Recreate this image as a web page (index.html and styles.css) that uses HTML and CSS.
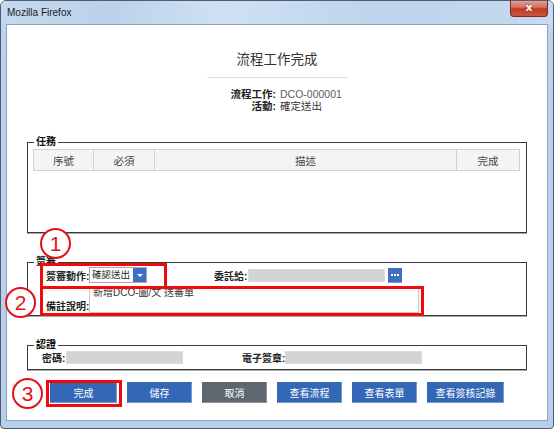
FILE: index.html
```html
<!DOCTYPE html>
<html>
<head>
<meta charset="utf-8">
<link rel="stylesheet" href="styles.css">
</head>
<body>
<div class="window">
  <div class="titlebar">
    <span class="title">Mozilla Firefox</span>
    <div class="close">x</div>
  </div>
  <div class="content">
    <h1 class="heading">流程工作完成</h1>
    <div class="rule"></div>
    <div class="info">
      <span class="info-label">流程工作:</span><span class="info-value code">DCO-000001</span>
      <span class="info-label">活動:</span><span class="info-value">確定送出</span>
    </div>

    <div class="group group-task">
      <span class="legend">任務</span>
      <div class="thead">
        <div class="th">序號</div>
        <div class="th">必須</div>
        <div class="th">描述</div>
        <div class="th">完成</div>
      </div>
      <div class="tbody"></div>
    </div>

    <div class="group group-sign">
      <span class="legend">簽審</span>
      <div class="row row-action">
        <span class="label">簽審動作:</span>
        <div class="select"><span class="select-text">確認送出</span><span class="select-btn"><span class="tri"></span></span></div>
        <span class="label label-delegate">委託給:</span>
        <div class="input input-delegate"></div>
        <div class="dots-btn"><span></span><span></span><span></span></div>
      </div>
      <div class="row row-note">
        <span class="label">備註說明:</span>
        <div class="textarea">新增DCO-圖/文 送審單</div>
      </div>
    </div>

    <div class="group group-auth">
      <span class="legend">認證</span>
      <div class="row row-auth">
        <span class="label label-pwd">密碼:</span>
        <div class="input input-pwd"></div>
        <span class="label label-esign">電子簽章:</span>
        <div class="input input-esign"></div>
      </div>
    </div>

    <div class="buttons">
      <div class="btn w67">完成</div>
      <div class="btn w65">儲存</div>
      <div class="btn w65 gray">取消</div>
      <div class="btn w65">查看流程</div>
      <div class="btn w65">查看表單</div>
      <div class="btn w77">查看簽核記錄</div>
    </div>
  </div>

  <div class="mark circle c1">1</div>
  <div class="mark circle c2">2</div>
  <div class="mark circle c3">3</div>
  <div class="mark box b1"></div>
  <div class="mark box b2"></div>
  <div class="mark box b3"></div>
</div>
</body>
</html>
```

FILE: styles.css
```css
* { box-sizing: border-box; }
html, body { margin: 0; padding: 0; background: #fff; }
body { font-family: "Liberation Sans", "Noto Sans CJK TC", sans-serif; color: #222; }

.window {
  position: relative;
  width: 554px;
  height: 429px;
  border: 1px solid #4d5d72;
  border-radius: 6px 6px 4px 4px;
  background: linear-gradient(180deg, #d3e3f4 0%, #bcd3ec 8%, #b7cfe9 100%);
  overflow: hidden;
}

.titlebar {
  height: 23px;
  position: relative;
  display: flex;
  align-items: center;
  padding-left: 6px;
  background: linear-gradient(90deg, #c4d9ef 0%, #bcd2ea 20%, #cfe0f3 40%, #bdd4ec 70%, #c6daf0 100%);
}
.title { font-size: 10px; color: #1a1a1a; }
.close {
  position: absolute;
  right: 5px;
  top: -1px;
  width: 38px;
  height: 17px;
  border: 1px solid #7a2a20;
  border-top: none;
  border-radius: 0 0 4px 4px;
  background: linear-gradient(180deg, #e7a898 0%, #d57060 45%, #c03a26 55%, #c9553f 100%);
  color: #fff;
  font-family: "DejaVu Sans", sans-serif;
  font-weight: bold;
  font-size: 11px;
  line-height: 15px;
  text-align: center;
  text-shadow: 0 0 2px #6b1a10;
}

.content {
  margin-left: 5px;
  width: 542px;
  height: 397px;
  background: #fff;
  border: 1px solid #8aa3c0;
  display: flex;
  flex-direction: column;
}

.heading {
  margin: 27px 0 0;
  font-size: 13.5px;
  line-height: 16px;
  font-weight: normal;
  text-align: center;
  color: #333;
}
.rule {
  align-self: center;
  width: 141px;
  height: 1px;
  background: #dcdcdc;
  margin-top: 9px;
}
.info {
  margin-top: 10px;
  display: grid;
  grid-template-columns: 1fr 1fr;
  column-gap: 4px;
  padding-left: 2px;
  font-size: 10.5px;
  line-height: 12px;
}
.info-label { text-align: right; font-weight: bold; color: #222; }
.info-value { color: #333; }
.info-value.code { color: #5a5a6a; }

.group {
  position: relative;
  margin: 0 20px;
  border: 1px solid #3a3a3a;
  box-shadow: 0 1px 0 #a8a8a8;
}
.legend {
  position: absolute;
  top: -7px;
  left: 6px;
  padding: 0 2px;
  background: #fff;
  font-size: 10px;
  line-height: 12px;
  font-weight: bold;
  color: #111;
}

.group-task { margin-top: 30px; padding: 6px 6px 0 5px; }
.thead {
  display: grid;
  grid-template-columns: 60px 61px 1fr 62px;
  height: 22px;
  border: 1px solid #d2d2d2;
  background: #f4f4f4;
}
.th {
  border-right: 1px solid #d2d2d2;
  font-size: 10.5px;
  color: #444;
  display: flex;
  align-items: center;
  justify-content: center;
}
.th:last-child { border-right: none; }
.tbody { height: 61px; }

.group-sign { margin-top: 29px; padding-left: 18px; }
.row { display: flex; }
.label { font-size: 10px; color: #222; font-weight: bold; white-space: nowrap; }
.row-action { height: 24px; align-items: center; }
.row-action .label { width: 43px; }
.select {
  width: 58px;
  height: 16px;
  border: 1px solid #a9a9a9;
  display: flex;
  align-items: stretch;
}
.select-text { flex: 1; font-size: 9.5px; line-height: 14px; padding-left: 2px; color: #222; white-space: nowrap; overflow: hidden; }
.select-btn {
  width: 13px;
  flex: none;
  background: #3d6fc2;
  display: flex;
  align-items: center;
  justify-content: center;
}
.tri {
  width: 0; height: 0;
  border-left: 3px solid transparent;
  border-right: 3px solid transparent;
  border-top: 3px solid #fff;
}
.row-action .label-delegate { width: 34px; margin-left: 67px; }
.input { background: #d4d4d4; border: 1px solid #dcdcdc; }
.input-delegate { width: 137px; height: 13px; }
.dots-btn {
  width: 14px;
  height: 15px;
  margin-left: 3px;
  background: #3f6fc0;
  border-bottom: 1px solid #7c9cd6;
  display: flex;
  align-items: center;
  justify-content: center;
  gap: 1px;
}
.dots-btn span { width: 2px; height: 2px; background: #fff; }

.row-note { height: 28px; align-items: flex-start; }
.row-note .label { width: 43px; align-self: flex-end; line-height: 14px; padding-bottom: 1px; }
.textarea {
  width: 330px;
  height: 26px;
  border: 1px solid #c8c8c8;
  border-top: none;
  font-size: 10px;
  line-height: 12px;
  padding: 0 0 0 3px;
  color: #333;
}

.group-auth { margin-top: 29px; padding-left: 14px; }
.row-auth { height: 23px; align-items: center; }
.label-pwd { width: 24px; }
.input-pwd { width: 117px; height: 13px; }
.label-esign { width: 43px; margin-left: 59px; }
.input-esign { width: 137px; height: 13px; }

.buttons {
  margin-top: 12px;
  padding-left: 43px;
  display: flex;
  gap: 10px;
}
.btn {
  height: 21px;
  background: #3467b6;
  border: 1px solid #3467b6;
  border-right-color: #7a9ad6;
  border-bottom-color: #7a9ad6;
  color: #fff;
  font-size: 10px;
  display: flex;
  align-items: center;
  justify-content: center;
}
.btn.gray { background: #5e6670; border-color: #5e6670; border-right-color: #8c939b; border-bottom-color: #8c939b; }
.w67 { width: 67px; }
.w65 { width: 65px; }
.w77 { width: 77px; }

.mark { position: absolute; }
.circle {
  width: 31px;
  height: 31px;
  border: 2px solid #e3101a;
  border-radius: 50%;
  background: #fff;
  color: #e3101a;
  font-family: "Liberation Sans", sans-serif;
  font-size: 21px;
  line-height: 27px;
  text-align: center;
}
.c1 { left: 39px; top: 227px; }
.c2 { left: 4px; top: 286px; }
.c3 { left: 11px; top: 377px; }
.box { border: 3px solid #f00a0a; }
.b1 { left: 39px; top: 262px; width: 127px; height: 26px; }
.b2 { left: 39px; top: 285px; width: 384px; height: 30px; }
.b3 { left: 45px; top: 379px; width: 76px; height: 27px; }
```
